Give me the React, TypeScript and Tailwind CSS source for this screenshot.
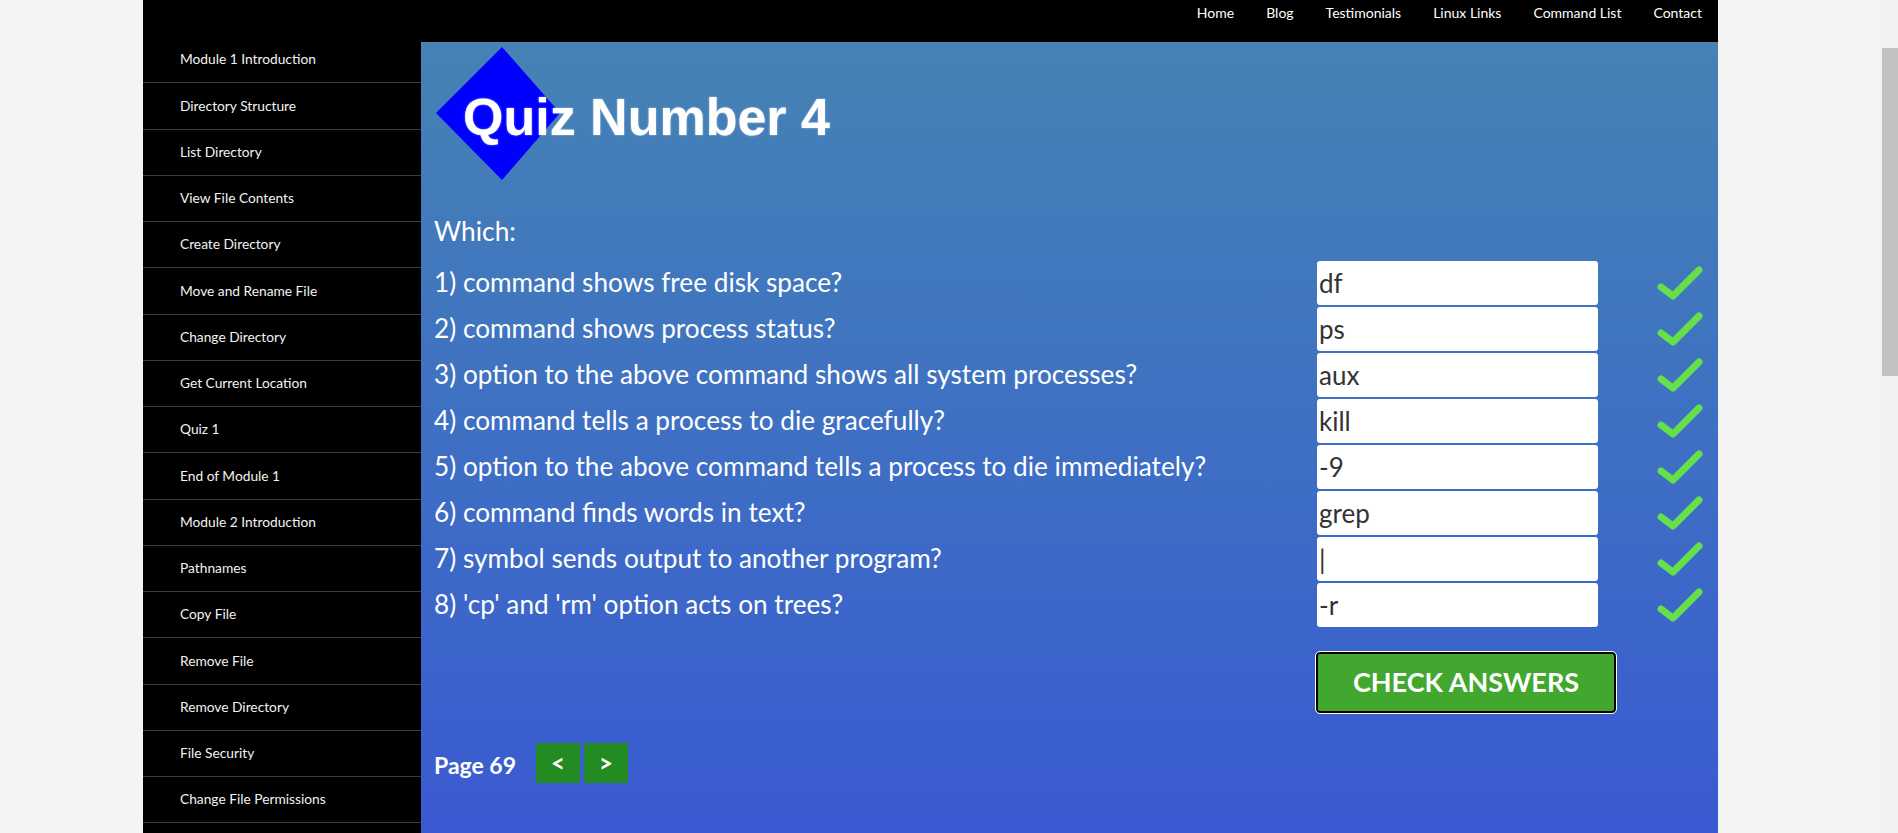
import React from 'react';

const navLinks = ['Home', 'Blog', 'Testimonials', 'Linux Links', 'Command List', 'Contact'];

const sideLinks = [
  'Module 1 Introduction',
  'Directory Structure',
  'List Directory',
  'View File Contents',
  'Create Directory',
  'Move and Rename File',
  'Change Directory',
  'Get Current Location',
  'Quiz 1',
  'End of Module 1',
  'Module 2 Introduction',
  'Pathnames',
  'Copy File',
  'Remove File',
  'Remove Directory',
  'File Security',
  'Change File Permissions',
];

const questions = [
  { q: '1) command shows free disk space?', a: 'df' },
  { q: '2) command shows process status?', a: 'ps' },
  { q: '3) option to the above command shows all system processes?', a: 'aux' },
  { q: '4) command tells a process to die gracefully?', a: 'kill' },
  { q: '5) option to the above command tells a process to die immediately?', a: '-9' },
  { q: '6) command finds words in text?', a: 'grep' },
  { q: '7) symbol sends output to another program?', a: '|' },
  { q: "8) 'cp' and 'rm' option acts on trees?", a: '-r' },
];

const Tick = () => (
  <svg width="46" height="38" viewBox="0 0 46 38">
    <path
      d="M4 23 L16 32 L42 6"
      fill="none"
      stroke="#66e04a"
      strokeWidth="7"
      strokeLinecap="round"
      strokeLinejoin="round"
    />
  </svg>
);

const App: React.FC = () => {
  return (
    <div className="min-h-screen bg-[#f4f4f4] font-['Lato','Open_Sans',sans-serif]">
      <div className="ml-[143px] w-[1575px] bg-black">
        {/* top nav */}
        <div className="flex h-[36px] justify-end pr-[16px]">
          <nav className="flex h-[24px] items-center gap-[32px] text-[14px] text-white">
            {navLinks.map((l) => (
              <a key={l} href="#" className="whitespace-nowrap">
                {l}
              </a>
            ))}
          </nav>
        </div>

        <div className="flex">
          {/* sidebar */}
          <aside className="w-[278px] shrink-0 pt-[1px]">
            {sideLinks.map((s) => (
              <a
                key={s}
                href="#"
                className="flex h-[46.25px] items-center border-b border-[#3c3c3c] pl-[37px] text-[13.75px] text-[#f2f2f2]"
              >
                {s}
              </a>
            ))}
          </aside>

          {/* main */}
          <main className="mt-[6px] flex-1 bg-gradient-to-b from-[#4682b4] to-[#3a58d2] pl-[13px] pr-[14px] pt-[5px] pb-[70px]">
            <div className="relative h-[134px]">
              <svg className="absolute left-[2px] top-0" width="134" height="134" viewBox="0 0 134 134">
                <polygon points="0,66 66,0 124,66 66,133" fill="#0000ff" />
              </svg>
              <span className="absolute left-[29px] top-[44px] font-['Liberation_Sans',Arial,sans-serif] text-[52px] font-bold leading-none text-white [text-shadow:0_0_2px_rgba(255,255,255,0.6)]">
                Quiz Number 4
              </span>
            </div>

            <div className="mt-[28px] flex h-[46px] items-center text-[26.3px] text-white">Which:</div>

            <div className="mt-[5px]">
              {questions.map((item) => (
                <div key={item.q} className="flex h-[46px] items-center">
                  <div className="flex-1 text-[26.2px] text-white">{item.q}</div>
                  <div className="flex h-[44px] w-[281px] items-center rounded-[3px] bg-white pl-[2px] text-[26px] text-[#333]">
                    {item.a}
                  </div>
                  <div className="flex w-[106px] justify-end pr-[1px]">
                    <Tick />
                  </div>
                </div>
              ))}
            </div>

            <div className="mt-[24px] flex">
              <div className="flex-1" />
              <button className="mr-[88px] h-[61px] w-[300px] rounded-[4px] border-2 border-black bg-[#42a72f] text-[27px] font-bold text-white outline outline-1 outline-white">
                CHECK ANSWERS
              </button>
            </div>

            <div className="mt-[30px] flex items-center">
              <span className="mr-[20px] translate-y-[2px] text-[23px] font-bold text-white">Page 69</span>
              <button className="flex h-[40px] w-[44px] items-center justify-center rounded-[2px] bg-[#228b22] text-[24px] font-bold text-white">
                &lt;
              </button>
              <button className="ml-[4px] flex h-[40px] w-[44px] items-center justify-center rounded-[2px] bg-[#228b22] text-[24px] font-bold text-white">
                &gt;
              </button>
            </div>
          </main>
        </div>
      </div>

      {/* browser scrollbar look-alike */}
      <div className="fixed right-0 top-0 h-full w-[18px] bg-[#f1f1f1]">
        <div className="ml-[2px] mt-[48px] h-[328px] w-[16px] bg-[#c1c1c1]" />
      </div>
    </div>
  );
};

export default App;
